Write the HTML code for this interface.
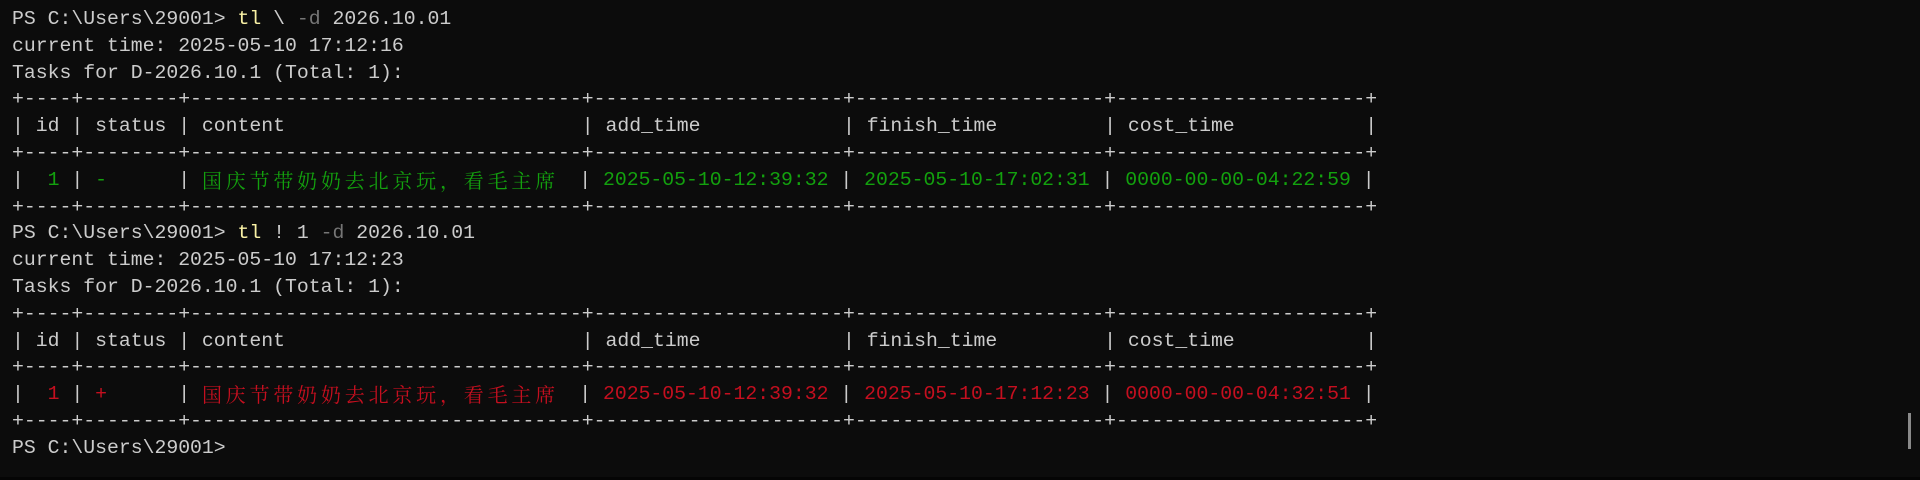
<!DOCTYPE html>
<html><head><meta charset="utf-8"><style>
html,body{margin:0;padding:0;background:#0c0c0c;width:1920px;height:480px;overflow:hidden}
pre{position:absolute;left:12px;top:6px;margin:0;font-family:"Liberation Mono","Noto Serif CJK SC",monospace;font-size:19.8px;line-height:26.8px;color:#cccccc;white-space:pre}
.y{color:#f9f1a5}.d{color:#767676}.g{color:#13a10e}.r{color:#c50f1f}
.c{font-family:"Noto Serif CJK SC","Noto Sans CJK SC",serif;display:inline-block;width:353.5px;letter-spacing:3.8px;font-size:20px;vertical-align:top;overflow:hidden;white-space:nowrap}
.sb{position:absolute;left:1908px;top:413px;width:3px;height:36px;background:#8a8a8a}
.bb{position:absolute;left:0;top:477px;width:1920px;height:3px;background:#050505}
</style></head><body>
<pre>PS C:\Users\29001&gt; <span class="y">tl</span> \ <span class="d">-d</span> 2026.10.01
current time: 2025-05-10 17:12:16
Tasks for D-2026.10.1 (Total: 1):
+----+--------+---------------------------------+---------------------+---------------------+---------------------+
| id | status | content                         | add_time            | finish_time         | cost_time           |
+----+--------+---------------------------------+---------------------+---------------------+---------------------+
| <span class="g"> 1</span> | <span class="g">-</span>      | <span class="c g">国庆节带奶奶去北京玩，看毛主席</span>  | <span class="g">2025-05-10-12:39:32</span> | <span class="g">2025-05-10-17:02:31</span> | <span class="g">0000-00-00-04:22:59</span> |
+----+--------+---------------------------------+---------------------+---------------------+---------------------+
PS C:\Users\29001&gt; <span class="y">tl</span> ! 1 <span class="d">-d</span> 2026.10.01
current time: 2025-05-10 17:12:23
Tasks for D-2026.10.1 (Total: 1):
+----+--------+---------------------------------+---------------------+---------------------+---------------------+
| id | status | content                         | add_time            | finish_time         | cost_time           |
+----+--------+---------------------------------+---------------------+---------------------+---------------------+
| <span class="r"> 1</span> | <span class="r">+</span>      | <span class="c r">国庆节带奶奶去北京玩，看毛主席</span>  | <span class="r">2025-05-10-12:39:32</span> | <span class="r">2025-05-10-17:12:23</span> | <span class="r">0000-00-00-04:32:51</span> |
+----+--------+---------------------------------+---------------------+---------------------+---------------------+
PS C:\Users\29001&gt;</pre>
<div class="sb"></div><div class="bb"></div>
</body></html>
